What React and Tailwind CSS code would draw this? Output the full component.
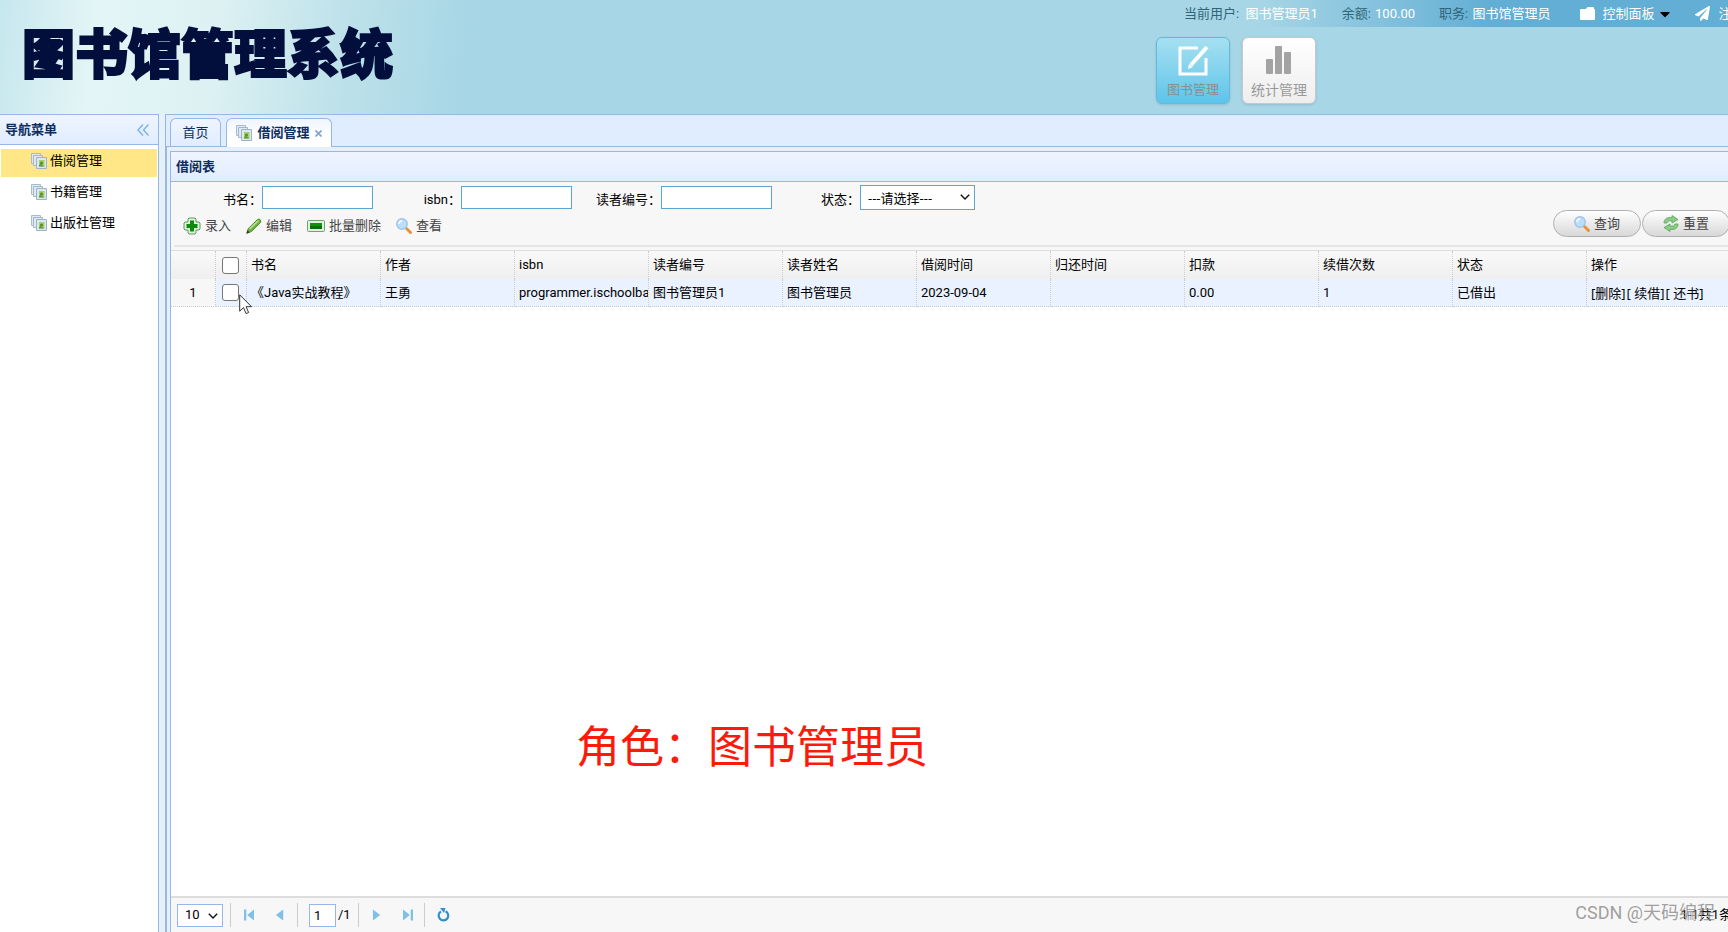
import React from 'react';
import { FaPaperPlane, FaCaretDown } from 'react-icons/fa';

const menuItems = ['借阅管理', '书籍管理', '出版社管理'];

const columns = [
  { title: '书名', value: '《Java实战教程》' },
  { title: '作者', value: '王勇' },
  { title: 'isbn', value: 'programmer.ischoolba' },
  { title: '读者编号', value: '图书管理员1' },
  { title: '读者姓名', value: '图书管理员' },
  { title: '借阅时间', value: '2023-09-04' },
  { title: '归还时间', value: '' },
  { title: '扣款', value: '0.00' },
  { title: '续借次数', value: '1' },
  { title: '状态', value: '已借出' },
];

const PagesIcon = () => (
  <svg width="16" height="16" viewBox="0 0 16 16" className="shrink-0">
    <path d="M.5.5h9v10h-9z" fill="#dfe9f2" stroke="#a9bccd" />
    <path d="M2.500 2.500h9v10h-9z" fill="#dfe9f2" stroke="#a3b8ca" />
    <path d="M5.500 4.500h10v11h-10z" fill="#dbe7f1" stroke="#9db3c7" />
    <path d="M8 7h5.500v6.500H8z" fill="#a5cf6a" />
    <path d="M8 12l2-1 3.500 2.500H8z" fill="#5f9a3c" />
    <circle cx="10.500" cy="10" r="1.600" fill="#5c8f2a" />
  </svg>
);

const FolderIcon = () => (
  <svg width="15" height="13" viewBox="0 0 15 13" fill="#fff">
    <path d="M0 3q0-1 1-1h5l1.500-2H13q1 0 1 1v1q1 0 1 1v9q0 1-1 1H1q-1 0-1-1z" />
  </svg>
);

const AddIcon = () => (
  <svg width="18" height="18" viewBox="0 0 18 18">
    <path d="M6 1h6l1 1v3h3l1 1v6l-1 1h-3v3l-1 1H6l-1-1v-3H2l-1-1V6l1-1h3V2z" fill="#e3f1e0" stroke="#5c9a5c" strokeLinejoin="round" />
    <path d="M7 3.500h4V7h3.500v4H11v3.500H7V11H3.500V7H7z" fill="#0b8a0b" />
  </svg>
);

const EditIcon = () => (
  <svg width="16" height="16" viewBox="0 0 16 16">
    <path d="M.8 15.200l1.500-4.700L11.500 1.500q1.500-1 2.700.2t.3 2.800L5.500 13.500z" fill="#6db33f" stroke="#4c8f2c" />
    <path d="M3.500 11L12.500 2.500" stroke="#b9e494" strokeWidth="1.500" />
    <path d="M.5 15.500l1-3.200 2.200 2.200z" fill="#333" />
  </svg>
);

const RemoveIcon = () => (
  <svg width="18" height="18" viewBox="0 0 18 18">
    <rect x=".5" y="3.500" width="17" height="11" rx="1" fill="#e2f1df" stroke="#6aa56a" />
    <rect x="3" y="6" width="12" height="6" fill="#0f920f" />
    <path d="M3 9h12v3H3z" fill="#0a720a" />
  </svg>
);

const SearchIcon = () => (
  <svg width="16" height="16" viewBox="0 0 16 16">
    <path d="M10.500 10.500l4 4" stroke="#e8933a" strokeWidth="3" strokeLinecap="round" />
    <circle cx="6" cy="6" r="5.200" fill="#b9dffb" stroke="#a3c3e8" strokeWidth="1.500" />
    <path d="M3 6a3 3 0 0 1 3-3" stroke="#fff" strokeWidth="1.500" fill="none" />
  </svg>
);

const ReloadIcon = () => (
  <svg width="16" height="17" viewBox="0 0 16 17" fill="#8ccb84" stroke="#5aa35c" strokeWidth=".8">
    <path d="M1 8C1 4 4 2 9 2.500V.5L15 4.500 9 8V6C6 5.500 4.500 6 4 8z" />
    <path d="M15 9c0 4-3 6-8 5.500v2L1 12.500 7 9v2c3 .5 4.500 0 5-2z" />
  </svg>
);

const ToolButton = ({ icon, label }) => (
  <button type="button" className="flex items-center gap-1 text-[#444]">
    {icon}
    <span>{label}</span>
  </button>
);

const PillButton = ({ icon, label }) => (
  <button
    type="button"
    className="flex h-[27px] w-[88px] shrink-0 items-center justify-center gap-1 rounded-full border border-[#b0b0b0] bg-linear-to-b from-white to-[#d8d8d8] text-[#444]"
  >
    {icon}
    <span>{label}</span>
  </button>
);

const Field = ({ id, label, className }) => (
  <div className={`flex shrink-0 items-center justify-end ${className}`}>
    <label htmlFor={id} className="pt-1 whitespace-nowrap">{label}</label>
    <input id={id} type="text" className="h-[23px] w-[111px] border border-[#5aa5d2] bg-white px-1 outline-none" />
  </div>
);

const Chevron = ({ className }) => (
  <svg width="10" height="6" viewBox="0 0 10 6" className={`pointer-events-none absolute ${className}`}>
    <path d="M.8.8L5 5 9.200.8" fill="none" stroke="#111" strokeWidth="1.400" />
  </svg>
);

const Header = () => (
  <header className="flex h-[114px] shrink-0 justify-between bg-[#a7d6e6] bg-[linear-gradient(97deg,#c6e7ee_0px,#e4f5f6_100px,#dcf1f3_220px,#bfe2ea_340px,#a7d6e6_470px)]">
    <h1 className="pt-5 pl-[22px] text-[53px] leading-[72px] font-black whitespace-nowrap text-[#020f3c] [-webkit-text-stroke:2px_#020f3c]">
      图书馆管理系统
    </h1>
    <div className="flex w-[588px] shrink-0 flex-col overflow-hidden">
      <div className="flex h-[27px] items-center bg-linear-to-r from-[#a7d6e6] from-20% to-[#62aed4] to-60% pl-11 whitespace-nowrap text-white">
        <span><span className="mr-[3px] text-[#2f6577]">当前用户:</span> 图书管理员1</span>
        <span className="ml-6"><span className="mr-px text-[#2f6577]">余额:</span> 100.00</span>
        <span className="ml-6"><span className="mr-px text-[#2f6577]">职务:</span> 图书馆管理员</span>
        <button type="button" className="ml-[30px] flex items-center gap-[7px]">
          <FolderIcon />
          控制面板
          <FaCaretDown size={16} className="-ml-1 text-black" />
        </button>
        <a href="#logout" className="ml-[22px] flex items-center gap-2">
          <FaPaperPlane size={15} />
          注销
        </a>
      </div>
      <nav className="flex gap-3 pt-[10px] pl-4">
        <button type="button" className="flex h-[67px] w-[74px] flex-col items-center justify-between rounded-md border border-[#62b9da] bg-linear-to-b from-[#a5e0f0] to-[#5cc4ea] pt-[7px] pb-[3px] text-[#8a8f90] shadow">
          <svg width="31" height="31" viewBox="0 0 31 31" fill="none" stroke="#fff" strokeWidth="3">
            <path d="M20 3H2v26h26V13" />
            <path d="M29 2L13 20" strokeWidth="4" />
            <path d="M10 24l1-5 4 3z" fill="#fff" stroke="none" />
          </svg>
          图书管理
        </button>
        <button type="button" className="flex h-[67px] w-[74px] flex-col items-center justify-between rounded-md border border-[#c4c9cb] bg-linear-to-b from-white to-[#eee] pt-[7px] pb-[3px] text-sm text-[#999] shadow">
          <svg width="26" height="30" viewBox="0 0 26 30" fill="#a3a3a3">
            <rect x="0" y="14" width="7" height="15" rx="1" />
            <rect x="9" y="1" width="7" height="28" rx="1" />
            <rect x="18" y="7" width="7" height="22" rx="1" />
          </svg>
          统计管理
        </button>
      </nav>
    </div>
  </header>
);

const Sidebar = () => (
  <aside className="w-[159px] shrink-0 border-t border-r border-[#95b8e7] bg-white">
    <div className="flex h-[30px] items-center justify-between border-b border-[#95b8e7] bg-linear-to-b from-[#eff5ff] to-[#e0ecff] pr-[9px] pl-[5px]">
      <h2 className="font-bold text-[#0e2d5f]">导航菜单</h2>
      <button type="button" aria-label="收起">
        <svg width="12" height="12" viewBox="0 0 12 12" fill="none" stroke="#7cb5ea" strokeWidth="1.500">
          <path d="M6 .5L1 6l5 5.500M11.500.5L6.500 6l5 5.500" />
        </svg>
      </button>
    </div>
    <ul className="flex flex-col gap-[3px] px-px pt-1">
      {menuItems.map((item, index) => (
        <li key={item} className={index === 0 ? 'bg-[#ffe788]' : ''}>
          <a href="#menu" className="flex h-7 items-center gap-[3px] pb-1 pl-[30px] text-black">
            <PagesIcon />
            {item}
          </a>
        </li>
      ))}
    </ul>
  </aside>
);

const Tabs = () => (
  <div className="flex h-[32px] shrink-0 items-end gap-[5px] border-b border-[#95b8e7] bg-[#e0ecff] pl-1">
    <button type="button" className="h-[28px] w-[51px] rounded-t-md border border-b-0 border-[#95b8e7] bg-linear-to-b from-[#eff5ff] to-[#e0ecff] text-[#0e2d5f]">
      首页
    </button>
    <div className="-mb-px flex h-[29px] w-[106px] items-center justify-center gap-[5px] rounded-t-md border border-b-0 border-[#95b8e7] bg-linear-to-b from-[#eff5ff] to-white to-60% font-bold text-[#0e2d5f]">
      <PagesIcon />
      借阅管理
      <button type="button" aria-label="关闭">
        <svg width="7" height="7" viewBox="0 0 7 7" stroke="#7fa3cf" strokeWidth="1.600">
          <path d="M.5.5l6 6M6.500.5l-6 6" />
        </svg>
      </button>
    </div>
  </div>
);

const SearchBar = () => (
  <div className="h-[69px] shrink-0 overflow-hidden border-b border-[#ddd] bg-[#f7f7f7]">
    <form className="flex h-full flex-col">
      <div className="flex pt-[3px]">
        <Field id="bookName" label="书名：" className="w-[202px]" />
        <Field id="isbn" label="isbn：" className="w-[199px]" />
        <Field id="readerNo" label="读者编号：" className="w-[200px]" />
        <div className="flex w-[203px] shrink-0 items-center justify-end">
          <label htmlFor="status" className="pt-1">状态：</label>
          <div className="relative">
            <select id="status" className="h-[25px] w-[115px] appearance-none border border-[#5aa5d2] bg-white pl-[7px] font-['Noto_Sans','Noto_Sans_CJK_SC',sans-serif] outline-none">
              <option>---请选择---</option>
            </select>
            <Chevron className="top-[9px] right-[5px]" />
          </div>
        </div>
      </div>
      <div className="flex items-center pl-3">
        <div className="flex items-center gap-[15px] pt-1">
          <ToolButton icon={<AddIcon />} label="录入" />
          <ToolButton icon={<EditIcon />} label="编辑" />
          <ToolButton icon={<RemoveIcon />} label="批量删除" />
          <ToolButton icon={<SearchIcon />} label="查看" />
        </div>
        <div className="-mr-[2px] ml-auto flex gap-px">
          <PillButton icon={<SearchIcon />} label="查询" />
          <PillButton icon={<ReloadIcon />} label="重置" />
        </div>
      </div>
      <div className="mt-auto mb-[3px] ml-[3px] border-b-2 border-[#e5e5e5]" />
    </form>
  </div>
);

const cell = 'overflow-hidden border-r border-dotted border-[#ccc] px-1 text-left font-normal whitespace-nowrap';

const Grid = () => (
  <div className="relative min-h-0 flex-1 overflow-hidden bg-white">
    <table className="w-[1600px] table-fixed border-separate border-spacing-0 text-black">
      <colgroup>
        <col className="w-[45px]" />
        <col className="w-[31px]" />
        {columns.map((column) => (
          <col key={column.title} className="w-[134px]" />
        ))}
        <col />
      </colgroup>
      <thead>
        <tr className="h-7 bg-linear-to-b from-[#f9f9f9] to-[#efefef]">
          <th className={cell} />
          <th className={cell}>
            <input type="checkbox" aria-label="全选" className="ml-[2px] block size-[17px] appearance-none rounded-[3px] border border-[#767676] bg-white" />
          </th>
          {columns.map((column) => (
            <th key={column.title} className={cell}>{column.title}</th>
          ))}
          <th className={cell}>操作</th>
        </tr>
      </thead>
      <tbody>
        <tr className="h-7 bg-[#eaf2ff]">
          <td className={`${cell} border-b bg-[#f7f7f7]`}><div className="text-center">1</div></td>
          <td className={`${cell} border-b`}>
            <input type="checkbox" aria-label="选择" className="ml-[2px] block size-[17px] appearance-none rounded-[3px] border border-[#767676] bg-white" />
          </td>
          {columns.map((column) => (
            <td key={column.title} className={`${cell} border-b`}>{column.value}</td>
          ))}
          <td className={`${cell} border-b`}>
            <div className="flex gap-px font-['Noto_Sans','Noto_Sans_CJK_SC',sans-serif]">
              <a href="#delete">[删除]</a>
              <a href="#renew">[ 续借]</a>
              <a href="#return">[ 还书]</a>
            </div>
          </td>
        </tr>
      </tbody>
    </table>
    {/* mouse pointer */}
    <svg width="14" height="21" viewBox="0 0 14 21" className="absolute top-[43px] left-[68px]">
      <path d="M.7.8v16.400l3.800-3.600 2.600 6 2.500-1.100-2.500-5.800h5.400z" fill="#fff" stroke="#333" />
    </svg>
    <p className="absolute top-[464px] left-[405px] text-[44px] leading-[66px] whitespace-nowrap text-[#fb1a0b]">
      角色：图书管理员
    </p>
  </div>
);

const Divider = () => <div className="h-6 w-px bg-[#ccc]" />;

const PageButton = ({ label, path, className }) => (
  <button type="button" aria-label={label} className={className}>
    <svg width="10" height="12" viewBox="0 0 11 12" fill="#7fc0ea">
      <path d={path} />
    </svg>
  </button>
);

const Pager = () => (
  <footer className="relative flex h-9 shrink-0 items-center overflow-hidden border-t-2 border-[#ddd] bg-[#f7f7f7] pl-[6px] text-black">
    <div className="relative">
      <select aria-label="每页条数" className="block h-[23px] w-[46px] appearance-none border border-[#95b8e7] bg-white pl-[7px] outline-none">
        <option>10</option>
      </select>
      <Chevron className="top-[9px] right-[5px]" />
    </div>
    <div className="ml-[7px]"><Divider /></div>
    <PageButton label="首页" path="M0 0h2.500v12H0zM11 0v12L3.500 6z" className="ml-[13px]" />
    <PageButton label="上一页" path="M9 0v12L1 6z" className="ml-[21px]" />
    <div className="ml-3"><Divider /></div>
    <input aria-label="页码" defaultValue="1" className="ml-[11px] h-[23px] w-[27px] border border-[#95b8e7] bg-white px-1 outline-none" />
    <span className="ml-[2px]">/1</span>
    <div className="ml-[7px]"><Divider /></div>
    <PageButton label="下一页" path="M1 0v12l8-6z" className="ml-[13px]" />
    <PageButton label="末页" path="M0 0v12l7.500-6zM8.500 0H11v12H8.500z" className="ml-[21px]" />
    <div className="ml-[11px]"><Divider /></div>
    <button type="button" aria-label="刷新" className="ml-3">
      <svg width="13" height="14" viewBox="0 0 13 14" fill="none" stroke="#2f8fd0" strokeWidth="2.200">
        <path d="M8.500 3.300A4.800 4.800 0 1 1 4 3.500" />
        <path d="M3 0h5.500L7 5z" fill="#2f8fd0" stroke="none" />
      </svg>
    </button>
    <span className="-mr-1 ml-auto whitespace-nowrap">1-1共1条</span>
    <span className="absolute top-[3px] right-[13px] text-[18px] leading-6 whitespace-nowrap text-[#888]/80">CSDN @天码编程</span>
  </footer>
);

export default function App() {
  return (
    <div className="flex h-screen flex-col overflow-hidden bg-white font-['Roboto','Noto_Sans_CJK_SC',sans-serif] text-[13px] leading-5">
      <Header />
      <div className="flex min-h-0 flex-1 bg-[#e6f0fb]">
        <Sidebar />
        <main className="ml-[6px] flex min-w-0 flex-1 flex-col border-t border-l border-[#95b8e7]">
          <Tabs />
          <div className="flex min-h-0 flex-1 flex-col border-l border-[#95b8e7] bg-[#e6f0fb] pt-1 pl-[3px]">
            <section className="flex min-h-0 flex-1 flex-col border-t border-l border-[#95b8e7]">
              <h2 className="h-[30px] shrink-0 border-b border-[#95b8e7] bg-linear-to-b from-[#eff5ff] to-[#e0ecff] pl-[5px] leading-[29px] font-bold text-[#0e2d5f]">
                借阅表
              </h2>
              <SearchBar />
              <Grid />
              <Pager />
            </section>
          </div>
        </main>
      </div>
    </div>
  );
}
